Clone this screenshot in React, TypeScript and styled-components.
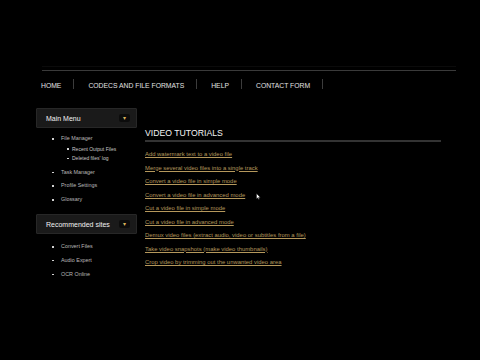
import React from 'react';
import styled, { createGlobalStyle } from 'styled-components';

const GlobalStyle = createGlobalStyle`
  html, body {
    margin: 0;
    padding: 0;
    background: #000;
  }
  body {
    width: 480px;
    height: 360px;
    overflow: hidden;
    font-family: 'Liberation Sans', Arial, sans-serif;
  }
`;

const SPage = styled.div`
  position: relative;
  width: 480px;
  height: 360px;
  padding-top: 66px;
  box-sizing: border-box;
  background: #000;
`;

const SHeader = styled.header`
  margin-left: 42px;
  width: 414px;
  border-top: 1px solid #0b0b0b;
  padding-top: 3px;
`;

const SHeaderLine = styled.div`
  height: 1px;
  background: #3a3a3a;
`;

const SNav = styled.nav`
  display: flex;
  align-items: center;
  height: 28px;
  margin-left: -1px;
`;

const SNavItem = styled.a<{ $first?: boolean }>`
  position: relative;
  display: flex;
  align-items: center;
  padding: 0 13px 0 ${({ $first }) => ($first ? '0' : '14px')};
  font-size: 6.8px;
  color: #e2e2e2;
  text-decoration: none;
  white-space: nowrap;
  &::after {
    content: '';
    position: absolute;
    right: 0;
    top: -3px;
    width: 1px;
    height: 10px;
    background: #3c3c3c;
  }
`;

const SBody = styled.div`
  display: flex;
  gap: 8px;
  margin-left: 36px;
  margin-top: 9px;
`;

const SSidebar = styled.aside`
  width: 101px;
  display: flex;
  flex-direction: column;
`;

const SBlockHeader = styled.div<{ $spaceTop?: number }>`
  display: flex;
  align-items: center;
  justify-content: space-between;
  height: 18px;
  padding: 0 6px 0 9px;
  margin-top: ${({ $spaceTop }) => $spaceTop ?? 0}px;
  background: #1a1a1a;
  border: 1px solid #272727;
  border-radius: 1px;
  color: #f2f2f2;
  font-size: 7px;
`;

const SArrowBadge = styled.span`
  display: flex;
  align-items: center;
  justify-content: center;
  width: 11px;
  height: 8px;
  border-radius: 2px;
  background: #0c0c0c;
  color: #d9b45c;
  font-size: 6px;
  line-height: 1;
`;

const SList = styled.ul<{ $nested?: boolean; $spaceTop?: number }>`
  list-style: none;
  margin: ${({ $spaceTop }) => $spaceTop ?? 0}px 0 0;
  padding: 0 0 0 ${({ $nested }) => ($nested ? 6 : 16)}px;
  display: flex;
  flex-direction: column;
`;

const SItem = styled.li<{ $small?: boolean; $gap: number }>`
  position: relative;
  padding-left: ${({ $small }) => ($small ? 5 : 9)}px;
  margin-top: ${({ $gap }) => $gap}px;
  font-size: ${({ $small }) => ($small ? 5 : 5.4)}px;
  line-height: ${({ $small }) => ($small ? 6 : 7)}px;
  color: ${({ $small }) => ($small ? '#c8c8c8' : '#b8b8b8')};
  &::before {
    content: '';
    position: absolute;
    left: 0;
    top: ${({ $small }) => ($small ? 2.5 : 3)}px;
    width: 1.5px;
    height: 1.5px;
    background: #d0d0d0;
  }
`;

const SContent = styled.main`
  display: flex;
  flex-direction: column;
  width: 296px;
  margin-top: 20px;
`;

const STitle = styled.h2`
  margin: 0;
  padding-bottom: 1px;
  border-bottom: 2px solid #333;
  font-size: 8.7px;
  font-weight: normal;
  line-height: 11px;
  color: #f4f4f4;
`;

const SLinks = styled.div`
  display: flex;
  flex-direction: column;
  align-items: flex-start;
  gap: 6.3px;
  margin-top: 9px;
`;

const SLink = styled.a`
  font-size: 5.9px;
  line-height: 7.2px;
  color: #b5985c;
  text-decoration: underline;
  text-underline-offset: 1px;
  white-space: nowrap;
`;

const SCursor = styled.svg`
  position: absolute;
  left: 256px;
  top: 193px;
  width: 5px;
  height: 7px;
`;

const tutorials = [
  'Add watermark text to a video file',
  'Merge several video files into a single track',
  'Convert a video file in simple mode',
  'Convert a video file in advanced mode',
  'Cut a video file in simple mode',
  'Cut a video file in advanced mode',
  'Demux video files (extract audio, video or subtitles from a file)',
  'Take video snapshots (make video thumbnails)',
  'Crop video by trimming out the unwanted video area',
];

export default function App() {
  return (
    <>
      <GlobalStyle />
      <SPage>
        <SHeader>
          <SHeaderLine />
          <SNav>
            <SNavItem $first>HOME</SNavItem>
            <SNavItem>CODECS AND FILE FORMATS</SNavItem>
            <SNavItem>HELP</SNavItem>
            <SNavItem>CONTACT FORM</SNavItem>
          </SNav>
        </SHeader>
        <SBody>
          <SSidebar>
            <SBlockHeader>
              Main Menu
              <SArrowBadge>▾</SArrowBadge>
            </SBlockHeader>
            <SList $spaceTop={7}>
              <SItem $gap={0}>
                File Manager
                <SList $nested>
                  <SItem $small $gap={3.5}>Recent Output Files</SItem>
                  <SItem $small $gap={3.5}>Deleted files' log</SItem>
                </SList>
              </SItem>
              <SItem $gap={7.5}>Task Manager</SItem>
              <SItem $gap={6.5}>Profile Settings</SItem>
              <SItem $gap={7}>Glossary</SItem>
            </SList>
            <SBlockHeader $spaceTop={11}>
              Recommended sites
              <SArrowBadge>▾</SArrowBadge>
            </SBlockHeader>
            <SList $spaceTop={9}>
              <SItem $gap={0}>Convert Files</SItem>
              <SItem $gap={6.5}>Audio Expert</SItem>
              <SItem $gap={7}>OCR Online</SItem>
            </SList>
          </SSidebar>
          <SContent>
            <STitle>VIDEO TUTORIALS</STitle>
            <SLinks>
              {tutorials.map((t) => (
                <SLink key={t}>{t}</SLink>
              ))}
            </SLinks>
          </SContent>
        </SBody>
        <SCursor viewBox="0 0 5 7">
          <path d="M0.5 0.5 L0.5 6 L1.8 4.7 L2.8 6.5 L3.5 6.1 L2.6 4.4 L4.4 4.4 Z" fill="#fff" stroke="#000" strokeWidth="0.4" />
        </SCursor>
      </SPage>
    </>
  );
}
